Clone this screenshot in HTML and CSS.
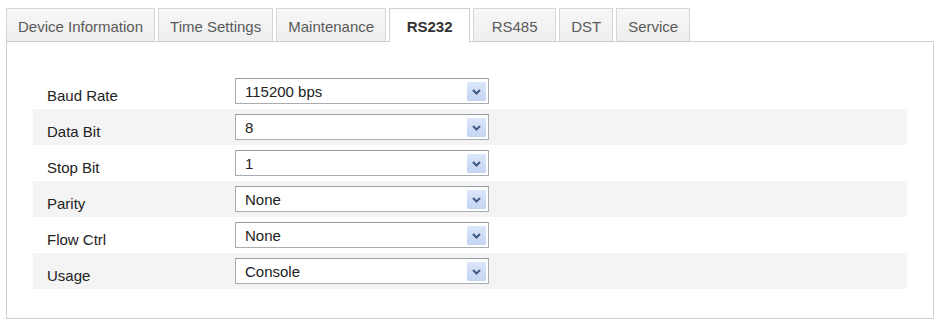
FILE: index.html
```html
<!DOCTYPE html>
<html lang="en">

<head>
  <meta charset="UTF-8">
  <meta name="viewport" content="width=device-width, initial-scale=1.0">
  <title>RS232</title>
  <link rel="stylesheet" href="styles.css">
</head>

<body>
  <div class="tabs">
    <div class="tab">Device Information</div>
    <div class="tab">Time Settings</div>
    <div class="tab">Maintenance</div>
    <div class="tab tab-wide active">RS232</div>
    <div class="tab tab-wide">RS485</div>
    <div class="tab">DST</div>
    <div class="tab">Service</div>
  </div>

  <div class="panel">
    <div class="row">
      <span class="label">Baud Rate</span>
      <div class="select"><span class="value">115200 bps</span><span class="arrow"><svg width="9" height="6" viewBox="0 0 9 6"><path d="M1 1l3.5 3.5L8 1" fill="none" stroke="#3f5a87" stroke-width="2"/></svg></span></div>
    </div>
    <div class="row">
      <span class="label">Data Bit</span>
      <div class="select"><span class="value">8</span><span class="arrow"><svg width="9" height="6" viewBox="0 0 9 6"><path d="M1 1l3.5 3.5L8 1" fill="none" stroke="#3f5a87" stroke-width="2"/></svg></span></div>
    </div>
    <div class="row">
      <span class="label">Stop Bit</span>
      <div class="select"><span class="value">1</span><span class="arrow"><svg width="9" height="6" viewBox="0 0 9 6"><path d="M1 1l3.5 3.5L8 1" fill="none" stroke="#3f5a87" stroke-width="2"/></svg></span></div>
    </div>
    <div class="row">
      <span class="label">Parity</span>
      <div class="select"><span class="value">None</span><span class="arrow"><svg width="9" height="6" viewBox="0 0 9 6"><path d="M1 1l3.5 3.5L8 1" fill="none" stroke="#3f5a87" stroke-width="2"/></svg></span></div>
    </div>
    <div class="row">
      <span class="label">Flow Ctrl</span>
      <div class="select"><span class="value">None</span><span class="arrow"><svg width="9" height="6" viewBox="0 0 9 6"><path d="M1 1l3.5 3.5L8 1" fill="none" stroke="#3f5a87" stroke-width="2"/></svg></span></div>
    </div>
    <div class="row">
      <span class="label">Usage</span>
      <div class="select"><span class="value">Console</span><span class="arrow"><svg width="9" height="6" viewBox="0 0 9 6"><path d="M1 1l3.5 3.5L8 1" fill="none" stroke="#3f5a87" stroke-width="2"/></svg></span></div>
    </div>
  </div>
</body>

</html>
```

FILE: styles.css
```css
body {
  margin: 8px 3px 0 6px;
  font-family: 'Liberation Sans', Arial, sans-serif;
  font-size: 15px;
  color: #333;
  background-color: #fff;
}

.tabs {
  display: flex;
  gap: 3px;
  height: 34px;
  position: relative;
  z-index: 1;
}

.tab {
  box-sizing: border-box;
  height: 34px;
  line-height: 35px;
  padding: 0 11px;
  text-align: center;
  color: #5a5a5a;
  background: linear-gradient(#f7f7f7, #eeeeee);
  border: 1px solid #d6d6d6;
  border-bottom-color: #c8c8c8;
}

.tab-wide {
  min-width: 83px;
}

.tab.active {
  background: #fff;
  color: #333;
  font-weight: bold;
  border-color: #cfcfcf;
  border-bottom-color: #fff;
  height: 35px;
  min-width: 81px;
}

.panel {
  box-sizing: border-box;
  width: 928px;
  height: 278px;
  margin-top: -1px;
  border: 1px solid #cfcfcf;
  padding: 31px 26px 0 26px;
}

.row {
  display: flex;
  align-items: center;
  height: 36px;
}

.row:nth-child(even) {
  background-color: #f4f4f4;
}

.label {
  width: 188px;
  padding-left: 14px;
  margin-top: 9px;
  color: #222;
}

.select {
  box-sizing: border-box;
  width: 254px;
  height: 26px;
  display: flex;
  align-items: center;
  justify-content: space-between;
  background: #fff;
  border: 1px solid #a9adb3;
  border-top-color: #9a9fa6;
  padding: 0 2px 0 9px;
  color: #222;
}

.arrow {
  width: 19px;
  height: 19px;
  display: flex;
  align-items: center;
  justify-content: center;
  padding-top: 2px;
  box-sizing: border-box;
  background: linear-gradient(#dbe6f9, #c3d5f3);
  border-radius: 1px;
}
```
